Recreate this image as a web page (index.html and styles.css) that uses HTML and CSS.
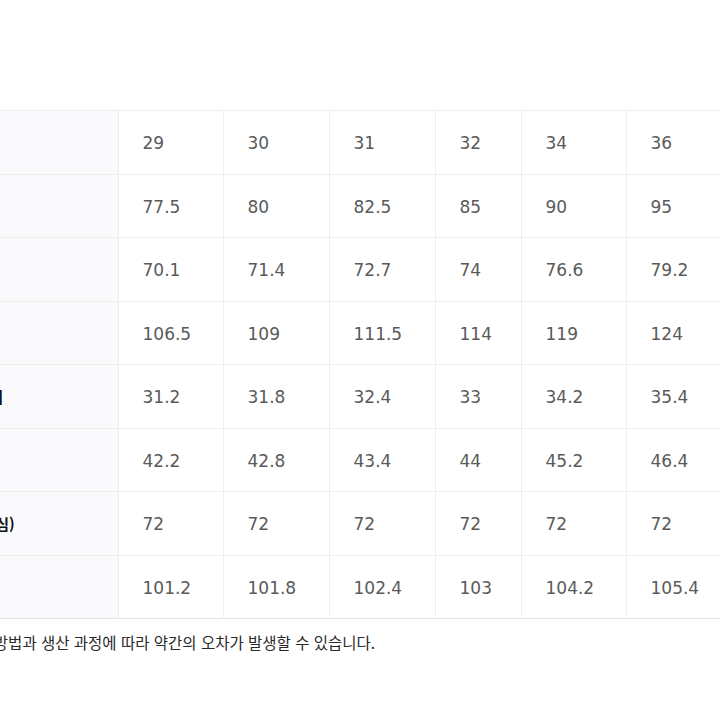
FILE: index.html
```html
<!DOCTYPE html>
<html lang="ko">
<head>
<meta charset="utf-8">
<title>사이즈 표</title>
<link rel="stylesheet" href="styles.css">
</head>
<body>
<div class="page">
  <table class="size-table">
    <colgroup>
      <col class="col-label">
      <col class="col-a">
      <col class="col-b">
      <col class="col-b">
      <col class="col-c">
      <col class="col-a">
      <col class="col-a">
    </colgroup>
    <tbody>
      <tr><th>사이즈</th><td>29</td><td>30</td><td>31</td><td>32</td><td>34</td><td>36</td></tr>
      <tr><th>허리</th><td>77.5</td><td>80</td><td>82.5</td><td>85</td><td>90</td><td>95</td></tr>
      <tr><th>엉덩이</th><td>70.1</td><td>71.4</td><td>72.7</td><td>74</td><td>76.6</td><td>79.2</td></tr>
      <tr><th>힙</th><td>106.5</td><td>109</td><td>111.5</td><td>114</td><td>119</td><td>124</td></tr>
      <tr><th>앞 허벅지</th><td>31.2</td><td>31.8</td><td>32.4</td><td>33</td><td>34.2</td><td>35.4</td></tr>
      <tr><th>밑위</th><td>42.2</td><td>42.8</td><td>43.4</td><td>44</td><td>45.2</td><td>46.4</td></tr>
      <tr><th>기장 (인심)</th><td>72</td><td>72</td><td>72</td><td>72</td><td>72</td><td>72</td></tr>
      <tr><th>총장</th><td>101.2</td><td>101.8</td><td>102.4</td><td>103</td><td>104.2</td><td>105.4</td></tr>
    </tbody>
  </table>
  <p class="note">측정 방법과 생산 과정에 따라 약간의 오차가 발생할 수 있습니다.</p>
</div>
</body>
</html>
```

FILE: styles.css
```css
html, body {
  margin: 0;
  padding: 0;
  background: #ffffff;
  overflow: hidden;
}

.page {
  margin-left: -80px;
  padding-top: 110px;
}

.size-table {
  border-collapse: collapse;
  table-layout: fixed;
  width: 811px;
  border-top: 1px solid #e4e4e4;
  border-bottom: 1px solid #e4e4e4;
}

.col-label { width: 198px; }
.col-a { width: 105px; }
.col-b { width: 106px; }
.col-c { width: 86px; }

.size-table tr {
  height: 63.5px;
}

.size-table th,
.size-table td {
  border-top: 1px solid #eeeeee;
  border-left: 1px solid #eeeeee;
  padding: 0 0 0 24px;
  text-align: left;
  vertical-align: middle;
}

.size-table th {
  border-left: none;
  background: #faf9fb;
  font-family: "Noto Sans CJK KR", "Noto Sans", sans-serif;
  font-weight: 700;
  font-size: 15px;
  color: #111111;
}

.size-table td {
  font-family: "DejaVu Sans", Verdana, sans-serif;
  font-size: 17px;
  color: #5a5a5a;
  padding-top: 2px;
}

.note {
  margin: 13px 0 0 0;
  padding-left: 41px;
  font-family: "Noto Sans CJK KR", "Noto Sans", sans-serif;
  font-size: 15.5px;
  line-height: 20px;
  color: #2a2a2a;
}
```
